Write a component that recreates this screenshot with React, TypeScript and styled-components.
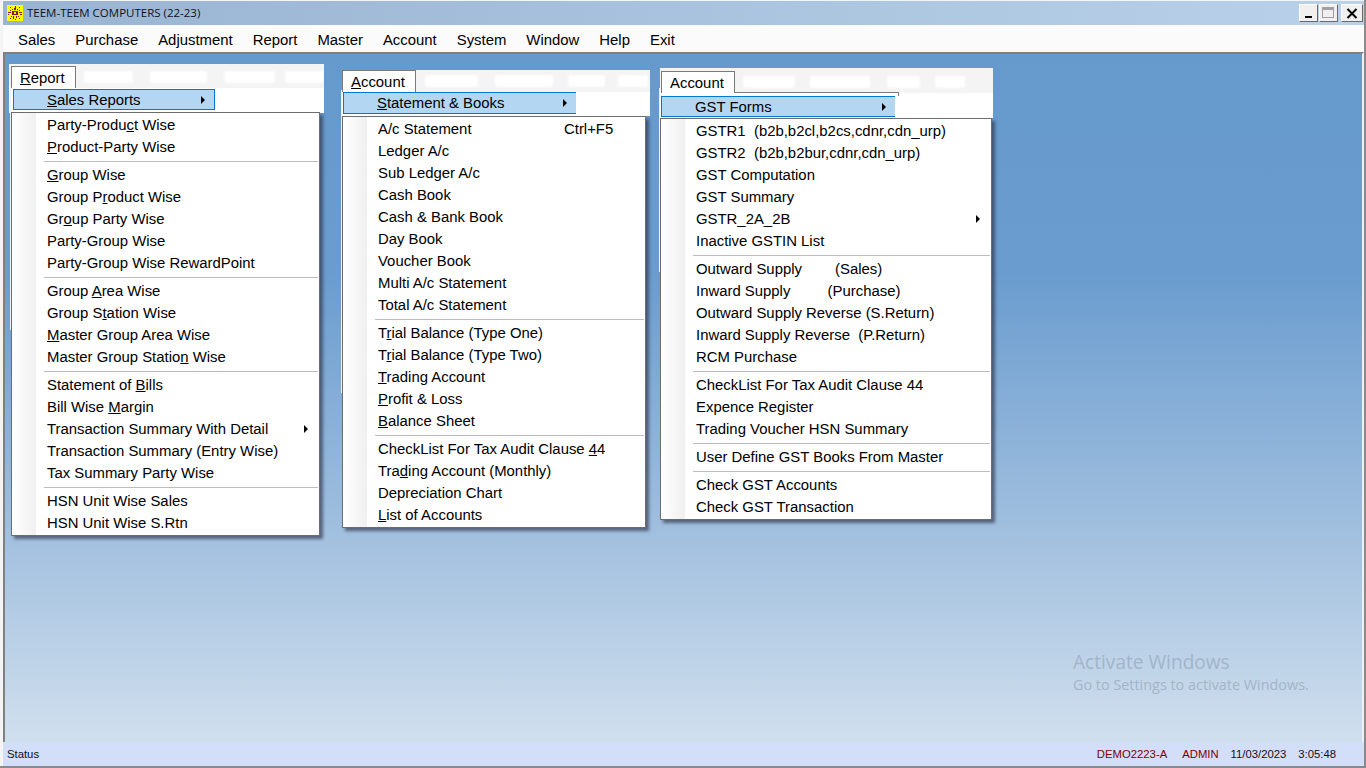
import React from "react";
import styled, { createGlobalStyle } from "styled-components";

const GlobalStyle = createGlobalStyle`
  html, body {
    margin: 0;
    padding: 0;
    overflow: hidden;
  }
  * {
    box-sizing: border-box;
  }
`;

const Shell = styled.div`
  display: flex;
  flex-direction: column;
  width: 1366px;
  height: 768px;
  padding-top: 1px;
  background: #f4f4f4;
  border-right: 2px solid #8a8a8a;
  border-bottom: 2px solid #8a8a8a;
  font-family: "Liberation Sans", Arial, sans-serif;
  color: #000;
`;

const TitleBar = styled.div`
  display: flex;
  align-items: center;
  height: 24px;
  margin-left: 3px;
  padding: 0 1px 0 4px;
  background: linear-gradient(90deg, #99b4d1, #b9d1ea);
`;

const Logo = styled.svg`
  width: 16px;
  height: 16px;
  flex: none;
`;

const TitleText = styled.span`
  margin: -1px 0 0 4px;
  font-family: "Open Sans", sans-serif;
  font-size: 11.5px;
  color: #10101c;
`;

const WindowButtons = styled.div`
  display: flex;
  margin-left: auto;
`;

const WindowButton = styled.div<{ $wide?: boolean }>`
  display: flex;
  align-items: center;
  justify-content: center;
  width: ${(p) => (p.$wide ? "22px" : "19px")};
  height: 18px;
  margin-left: ${(p) => (p.$wide ? "3px" : "1px")};
  background: #f0f0f0;
  border: 1px solid;
  border-color: #fff #696969 #696969 #fff;
`;

const MenuBar = styled.div`
  display: flex;
  align-items: center;
  height: 27px;
  margin-left: 3px;
  padding: 3px 0 0 5px;
  background: #fbfbfb;
`;

const MenuBarItem = styled.span`
  padding: 0 10px;
  font-size: 14.9px;
`;

const Desktop = styled.div`
  position: relative;
  flex: 1;
  margin-left: 3px;
  background: linear-gradient(180deg, #6699cc 0%, #6a9ccf 32%, #a2c0df 70%, #d0dfee 100%);
  border-top: 2px solid #808080;
  border-left: 2px solid #808080;
  border-right: 2px solid #f0f0f0;
`;

const Panel = styled.div<{ $x: number; $y: number }>`
  position: absolute;
  left: ${(p) => p.$x}px;
  top: ${(p) => p.$y}px;
`;

const StaleEdge = styled.div<{ $x: number; $h: number }>`
  position: absolute;
  left: ${(p) => p.$x}px;
  top: 20px;
  width: 1px;
  height: ${(p) => p.$h}px;
  background: #eef2f6;
`;

const Head = styled.div<{ $w: number; $h: number; $pad: string }>`
  width: ${(p) => p.$w}px;
  height: ${(p) => p.$h}px;
  padding: ${(p) => p.$pad};
  background: linear-gradient(#f4f4f4 22px, #fff 22px);
`;

const TabRow = styled.div`
  display: flex;
  align-items: center;
  height: 22px;
  overflow: hidden;
  background: #f4f4f4;
`;

const Tab = styled.div<{ $w: number }>`
  flex: none;
  width: ${(p) => p.$w}px;
  height: 22px;
  padding: 2px 0 0 8px;
  background: #fff;
  border: 1px solid #7a7a7a;
  border-bottom: none;
  font-size: 14.9px;
  line-height: 18px;
`;

const Smudge = styled.span<{ $w: number; $gap: number }>`
  flex: none;
  width: ${(p) => p.$w}px;
  height: 12px;
  margin-left: ${(p) => p.$gap}px;
  background: #fff;
  border-radius: 3px;
  filter: blur(1px);
`;

const Ledge = styled.div<{ $w: number }>`
  width: ${(p) => p.$w}px;
  height: 4px;
  margin-top: -1px;
  border-top: 1px solid #7a7a7a;
  border-right: 1px solid #7a7a7a;
`;

const Selected = styled.div<{ $w: number; $h: number; $x: number; $top: number; $closed?: boolean }>`
  display: flex;
  align-items: center;
  justify-content: space-between;
  width: ${(p) => p.$w}px;
  height: ${(p) => p.$h}px;
  margin: ${(p) => p.$top}px 0 0 ${(p) => p.$x}px;
  padding: 0 9px 0 33px;
  background: #b3d7f3;
  border: 1px solid #0078d7;
  border-right: ${(p) => (p.$closed ? "1px solid #0078d7" : "none")};
  font-size: 14.9px;
`;

const DropMenu = styled.div<{ $w: number; $x: number; $top: number }>`
  width: ${(p) => p.$w}px;
  margin: ${(p) => p.$top}px 0 0 ${(p) => p.$x}px;
  padding: 1px 0;
  background: linear-gradient(90deg, #fff 0, #f0f0f0 24px, #fff 24px);
  border: 1px solid #6d6d6d;
  box-shadow: 3px 3px 3px rgba(45, 50, 70, 0.65);
`;

const Row = styled.div`
  display: flex;
  align-items: center;
  position: relative;
  height: 22px;
  padding-left: 35px;
  font-size: 14.9px;
  white-space: pre;
`;

const Hint = styled.span`
  position: absolute;
  left: 221px;
`;

const RowArrow = styled.span`
  position: absolute;
  right: 11px;
  top: 7px;
`;

const Arrow = styled.span`
  display: block;
  width: 0;
  height: 0;
  border-top: 4px solid transparent;
  border-bottom: 4px solid transparent;
  border-left: 4px solid #000;
`;

const Divider = styled.div`
  height: 1px;
  margin: 3px 1px 2px 32px;
  background: #bdbdbd;
`;

const Watermark = styled.div`
  position: absolute;
  left: 1068px;
  top: 595px;
  font-family: "Open Sans", sans-serif;
  color: #a3b4c8;
`;

const WatermarkTitle = styled.div`
  font-size: 19.1px;
  line-height: 26px;
`;

const WatermarkLine = styled.div`
  font-size: 14.4px;
  line-height: 20px;
`;

const StatusBar = styled.div`
  display: flex;
  align-items: center;
  height: 24px;
  margin-left: 3px;
  padding: 0 28px 0 4px;
  background: #d3def8;
  font-size: 11.3px;
`;

const StatusCell = styled.span<{ $red?: boolean; $gap?: number }>`
  margin-left: ${(p) => p.$gap ?? 0}px;
  color: ${(p) => (p.$red ? "#800000" : "#10101c")};
`;

const StatusSpacer = styled.span`
  flex: 1;
`;

type Entry = string | { label: string; hint?: string; more?: boolean };

type PanelDef = {
  x: number;
  y: number;
  edge: { x: number; h: number };
  head: { w: number; h: number; pad: string };
  tab: { label: string; w: number };
  smudges: [number, number][];
  ledge?: number;
  selected: { label: string; w: number; h: number; x: number; top: number; closed?: boolean };
  menu: { w: number; x: number; top: number };
  rows: Entry[];
};

const menuBarItems = ["Sales", "Purchase", "Adjustment", "Report", "Master", "Account", "System", "Window", "Help", "Exit"];

// ^ marks the mnemonic letter of a label, "-" is a separator
const panels: PanelDef[] = [
  {
    x: 4,
    y: 10,
    edge: { x: 1, h: 246 },
    head: { w: 315, h: 49, pad: "2px 0 0 2px" },
    tab: { label: "^Report", w: 65 },
    smudges: [[49, 8], [57, 17], [51, 17], [39, 10]],
    selected: { label: "^Sales Reports", w: 202, h: 21, x: 2, top: 1, closed: true },
    menu: { w: 309, x: 2, top: -1 },
    rows: [
      "Party-Produ^ct Wise",
      "^Product-Party Wise",
      "-",
      "^Group Wise",
      "Group P^roduct Wise",
      "Gr^oup Party Wise",
      "Party-Group Wise",
      "Party-Group Wise RewardPoint",
      "-",
      "Group ^Area Wise",
      "Group S^tation Wise",
      "^Master Group Area Wise",
      "Master Group Statio^n Wise",
      "-",
      "Statement of ^Bills",
      "Bill Wise ^Margin",
      { label: "Transaction Summary With Detail", more: true },
      "Transaction Summary (Entry Wise)",
      "Tax Summary Party Wise",
      "-",
      "HSN Unit Wise Sales",
      "HSN Unit Wise S.Rtn",
    ],
  },
  {
    x: 337,
    y: 16,
    edge: { x: -1, h: 303 },
    head: { w: 308, h: 46, pad: "0" },
    tab: { label: "^Account", w: 74 },
    smudges: [[53, 9], [58, 17], [37, 15], [30, 13]],
    selected: { label: "^Statement & Books", w: 233, h: 22, x: 1, top: 0 },
    menu: { w: 304, x: 0, top: 0 },
    rows: [
      { label: "A/c Statement", hint: "Ctrl+F5" },
      "Ledger A/c",
      "Sub Ledger A/c",
      "Cash Book",
      "Cash & Bank Book",
      "Day Book",
      "Voucher Book",
      "Multi A/c Statement",
      "Total A/c Statement",
      "-",
      "T^rial Balance (Type One)",
      "T^rial Balance (Type Two)",
      "^Trading Account",
      "^Profit & Loss",
      "^Balance Sheet",
      "-",
      "CheckList For Tax Audit Clause ^44",
      "Tra^ding Account (Monthly)",
      "Depreciation Chart",
      "^List of Accounts",
    ],
  },
  {
    x: 655,
    y: 14,
    edge: { x: -1, h: 184 },
    head: { w: 333, h: 50, pad: "3px 0 0 1px" },
    tab: { label: "Account", w: 74 },
    smudges: [[52, 8], [60, 15], [33, 17], [30, 15]],
    ledge: 238,
    selected: { label: "GST Forms", w: 234, h: 21, x: 0, top: 0 },
    menu: { w: 332, x: 0, top: 0 },
    rows: [
      "GSTR1  (b2b,b2cl,b2cs,cdnr,cdn_urp)",
      "GSTR2  (b2b,b2bur,cdnr,cdn_urp)",
      "GST Computation",
      "GST Summary",
      { label: "GSTR_2A_2B", more: true },
      "Inactive GSTIN List",
      "-",
      "Outward Supply        (Sales)",
      "Inward Supply         (Purchase)",
      "Outward Supply Reverse (S.Return)",
      "Inward Supply Reverse  (P.Return)",
      "RCM Purchase",
      "-",
      "CheckList For Tax Audit Clause 44",
      "Expence Register",
      "Trading Voucher HSN Summary",
      "-",
      "User Define GST Books From Master",
      "-",
      "Check GST Accounts",
      "Check GST Transaction",
    ],
  },
];

const Label = ({ text }: { text: string }) => {
  const parts = text.split("^");
  return (
    <span>
      {parts[0]}
      {parts.slice(1).map((part, i) => (
        <React.Fragment key={i}>
          <u>{part[0]}</u>
          {part.slice(1)}
        </React.Fragment>
      ))}
    </span>
  );
};

const logoDots = [
  "M3 2h1v1H3zM8 1h1v2H8zM12 2h1v1h-1zM5 4h1v1H5zM7 3h2v2H7zM10 4h1v1h-1z",
  "M1 7h3v1H1zM1 9h1v1H1zM5 6h6v4H5zM12 7h3v1h-3zM13 9h2v1h-2zM3 5h1v1H3zM12 5h1v1h-1z",
  "M4 11h1v1H4zM6 11h1v3H6zM9 11h1v2H9zM11 11h1v1h-1zM3 13h1v1H3zM12 13h1v1h-1zM8 14h1v1H8z",
];

const TeemLogo = () => (
  <Logo viewBox="0 0 16 16">
    <rect width="16" height="16" fill="#ffff00" />
    {logoDots.map((d) => (
      <path key={d} d={d} fill="#8e1230" />
    ))}
    <rect x="7" y="7" width="2" height="2" fill="#ffff00" />
  </Logo>
);

const MenuPanel = ({ def }: { def: PanelDef }) => (
  <Panel $x={def.x} $y={def.y}>
    <StaleEdge $x={def.edge.x} $h={def.edge.h} />
    <Head $w={def.head.w} $h={def.head.h} $pad={def.head.pad}>
      <TabRow>
        <Tab $w={def.tab.w}>
          <Label text={def.tab.label} />
        </Tab>
        {def.smudges.map(([w, gap], i) => (
          <Smudge key={i} $w={w} $gap={gap} />
        ))}
      </TabRow>
      {def.ledge && <Ledge $w={def.ledge} />}
      <Selected
        $w={def.selected.w}
        $h={def.selected.h}
        $x={def.selected.x}
        $top={def.selected.top}
        $closed={def.selected.closed}
      >
        <Label text={def.selected.label} />
        <Arrow />
      </Selected>
    </Head>
    <DropMenu $w={def.menu.w} $x={def.menu.x} $top={def.menu.top}>
      {def.rows.map((row, i) => {
        if (row === "-") return <Divider key={i} />;
        const item = typeof row === "string" ? { label: row } : row;
        return (
          <Row key={i}>
            <Label text={item.label} />
            {item.hint && <Hint>{item.hint}</Hint>}
            {item.more && (
              <RowArrow>
                <Arrow />
              </RowArrow>
            )}
          </Row>
        );
      })}
    </DropMenu>
  </Panel>
);

const App = () => {
  return (
    <Shell>
      <GlobalStyle />
      <TitleBar>
        <TeemLogo />
        <TitleText>TEEM-TEEM COMPUTERS (22-23)</TitleText>
        <WindowButtons>
          <WindowButton>
            <svg width="11" height="11" viewBox="0 0 11 11">
              <rect x="2" y="8" width="7" height="2" fill="#000" />
            </svg>
          </WindowButton>
          <WindowButton>
            <svg width="13" height="12" viewBox="0 0 13 12">
              <rect x="0.5" y="0.5" width="11" height="10" fill="none" stroke="#a0a0a0" />
              <rect x="1" y="1" width="10" height="2" fill="#a0a0a0" />
            </svg>
          </WindowButton>
          <WindowButton $wide>
            <svg width="12" height="11" viewBox="0 0 12 11">
              <path d="M1.5 1l9 9M10.5 1l-9 9" stroke="#000" strokeWidth="2" />
            </svg>
          </WindowButton>
        </WindowButtons>
      </TitleBar>
      <MenuBar>
        {menuBarItems.map((item) => (
          <MenuBarItem key={item}>{item}</MenuBarItem>
        ))}
      </MenuBar>
      <Desktop>
        {panels.map((def) => (
          <MenuPanel key={def.x} def={def} />
        ))}
        <Watermark>
          <WatermarkTitle>Activate Windows</WatermarkTitle>
          <WatermarkLine>Go to Settings to activate Windows.</WatermarkLine>
        </Watermark>
      </Desktop>
      <StatusBar>
        <StatusCell>Status</StatusCell>
        <StatusSpacer />
        <StatusCell $red>DEMO2223-A</StatusCell>
        <StatusCell $red $gap={15}>ADMIN</StatusCell>
        <StatusCell $gap={12}>11/03/2023</StatusCell>
        <StatusCell $gap={12}>3:05:48</StatusCell>
      </StatusBar>
    </Shell>
  );
};

export default App;
